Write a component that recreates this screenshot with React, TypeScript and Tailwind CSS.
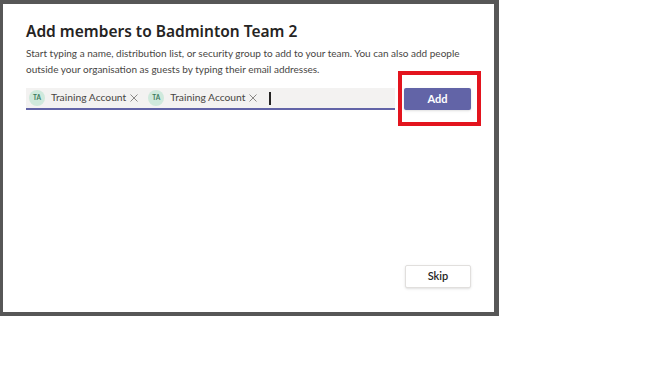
export default function App() {
  const chip = (
    <div className="flex items-center">
      <div className="flex size-[16px] items-center justify-center rounded-full bg-[#cfe9dc] text-[6.5px] font-bold text-[#3b7a5c]">
        TA
      </div>
      <span className="ml-[6px] text-[10.3px] text-[#484644]">Training Account</span>
      <svg className="ml-[4px]" width="8" height="8" viewBox="0 0 8 8">
        <path d="M0.5 0.5 L7.5 7.5 M7.5 0.5 L0.5 7.5" stroke="#8a8886" strokeWidth="1" />
      </svg>
    </div>
  );

  return (
    <div
      className="relative h-[383px] w-[666px] bg-white"
      style={{ fontFamily: 'Lato, "Noto Sans", sans-serif' }}
    >
      <div className="h-[316px] w-[499px] bg-[#575757] pl-[3px] pt-[4px]">
        <div className="flex h-[308px] w-[491px] flex-col bg-white pl-[23px] pr-[22px]">
          <h1
            className="mt-[16px] text-[15.5px] font-semibold leading-[22px] text-[#252423]"
            style={{ fontFamily: '"Noto Sans", sans-serif' }}
          >
            Add members to Badminton Team 2
          </h1>
          <p className="mt-[3px] text-[10px] leading-[16px] text-[#484644]">
            Start typing a name, distribution list, or security group to add to your team. You can also add people outside your organisation as guests by typing their email addresses.
          </p>
          <div className="mt-[11px] flex items-center">
            <div className="flex h-[22px] w-[369px] items-center gap-[10px] border-b-2 border-[#6264a7] bg-[#f3f2f1] pl-[3px]">
              {chip}
              {chip}
              <div className="ml-[2px] h-[13px] w-[1.5px] bg-[#252423]" />
            </div>
            <button className="ml-[9px] h-[22px] w-[67px] rounded-[2px] bg-[#6264a7] text-[11px] font-bold text-white shadow-sm">
              Add
            </button>
          </div>
          <div className="mt-auto mb-[24px] flex justify-end">
            <button className="mr-[1px] h-[23px] w-[66px] rounded-[2px] border border-[#e1dfdd] bg-white text-[11px] font-semibold text-[#252423] shadow-sm">
              Skip
            </button>
          </div>
        </div>
      </div>
      <div className="absolute left-[398px] top-[71px] h-[55px] w-[83px] border-[4px] border-[#e3141e]" />
    </div>
  );
}
